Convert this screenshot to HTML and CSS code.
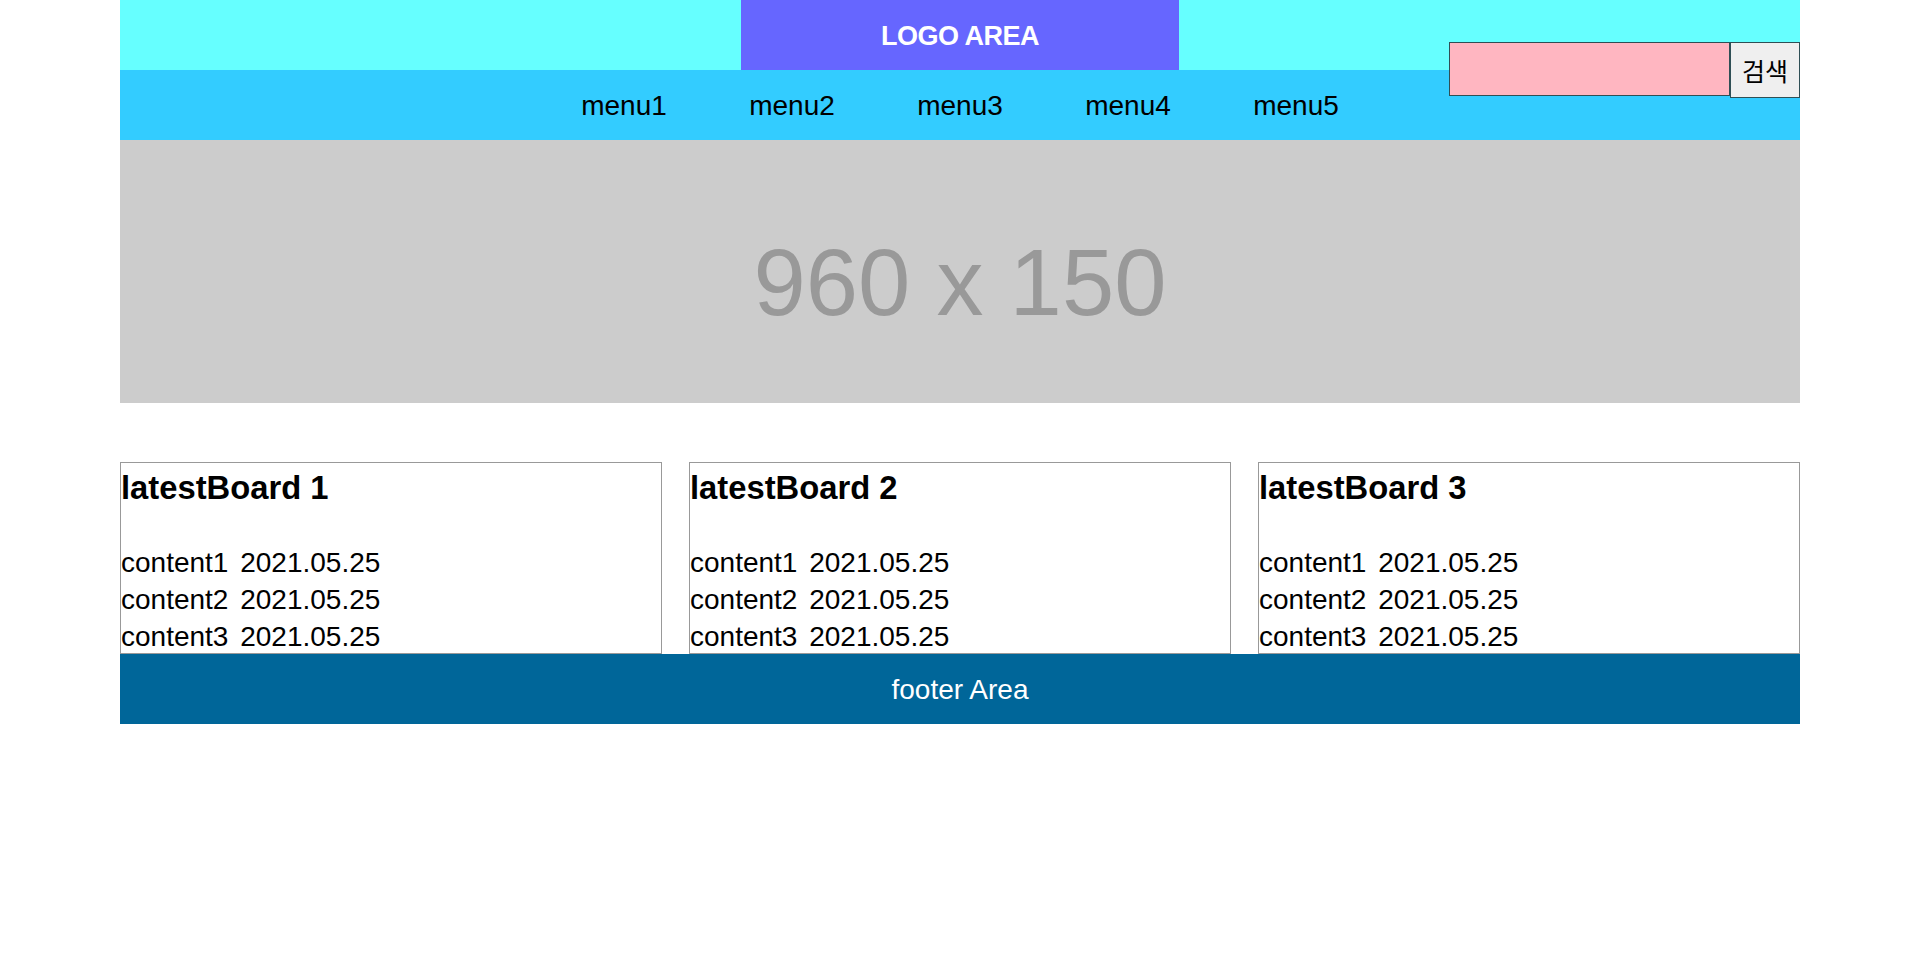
FILE: index.html
```html
<!DOCTYPE html>
<html lang="ko">
<head>
<meta charset="utf-8">
<title>Layout</title>
<link rel="stylesheet" href="styles.css">
</head>
<body>
<div class="wrap">
  <header class="header">
    <div class="logo">LOGO AREA</div>
    <form class="search">
      <input class="search-input" type="text">
      <button class="search-btn" type="button">검색</button>
    </form>
  </header>
  <nav class="nav">
    <ul class="menu">
      <li class="menu-item">menu1</li>
      <li class="menu-item">menu2</li>
      <li class="menu-item">menu3</li>
      <li class="menu-item">menu4</li>
      <li class="menu-item">menu5</li>
    </ul>
  </nav>
  <div class="banner"><span class="banner-text">960 x 150</span></div>
  <section class="boards">
    <div class="board">
      <h3 class="board-title">latestBoard 1</h3>
      <ul class="board-list">
        <li>content1 2021.05.25</li>
        <li>content2 2021.05.25</li>
        <li>content3 2021.05.25</li>
      </ul>
    </div>
    <div class="board">
      <h3 class="board-title">latestBoard 2</h3>
      <ul class="board-list">
        <li>content1 2021.05.25</li>
        <li>content2 2021.05.25</li>
        <li>content3 2021.05.25</li>
      </ul>
    </div>
    <div class="board">
      <h3 class="board-title">latestBoard 3</h3>
      <ul class="board-list">
        <li>content1 2021.05.25</li>
        <li>content2 2021.05.25</li>
        <li>content3 2021.05.25</li>
      </ul>
    </div>
  </section>
  <footer class="footer">footer Area</footer>
</div>
</body>
</html>
```
FILE: styles.css
```css
html, body {
  margin: 0;
  padding: 0;
  background: #ffffff;
}
body {
  font-family: "Liberation Sans", Arial, sans-serif;
  font-size: 28px;
  color: #000;
}
.wrap {
  width: 1680px;
  margin: 0 auto;
}
.header {
  position: relative;
  height: 70px;
  background: #66ffff;
}
.logo {
  box-sizing: border-box;
  width: 438px;
  height: 70px;
  margin: 0 auto;
  padding-top: 2px;
  background: #6666ff;
  color: #ffffff;
  font-weight: bold;
  font-size: 27px;
  letter-spacing: -0.5px;
  line-height: 68px;
  text-align: center;
}
.search {
  position: absolute;
  top: 42px;
  right: 0;
  margin: 0;
  display: flex;
  align-items: flex-start;
  z-index: 2;
}
.search-input {
  box-sizing: border-box;
  width: 281px;
  height: 54px;
  margin: 0;
  padding: 0 4px;
  border: 1px solid #2f4f55;
  background: #ffb6c1;
  outline: none;
}
.search-btn {
  box-sizing: border-box;
  width: 70px;
  height: 56px;
  margin: 0;
  padding: 0;
  border: 1px solid #2f4f55;
  border-radius: 0;
  background: #efefef;
  color: #000;
  font-family: "Noto Sans CJK KR", sans-serif;
  font-size: 25px;
  line-height: 1;
}
.nav {
  height: 70px;
  background: #33ccff;
}
.menu {
  display: flex;
  justify-content: center;
  margin: 0;
  padding: 2px 0 0;
  list-style: none;
}
.menu-item {
  width: 168px;
  line-height: 68px;
  text-align: center;
}
.banner {
  box-sizing: border-box;
  height: 263px;
  padding-top: 22px;
  background: #cccccc;
  display: flex;
  align-items: center;
  justify-content: center;
}
.banner-text {
  font-size: 94px;
  color: #999999;
  line-height: normal;
}
.boards {
  display: flex;
  justify-content: space-between;
  margin-top: 59px;
}
.board {
  box-sizing: border-box;
  width: 542px;
  height: 192px;
  border: 1px solid #999999;
  overflow: hidden;
}
.board-title {
  margin: 6px 0 0;
  font-size: 32.76px;
  line-height: 37px;
  font-weight: bold;
}
.board-list {
  margin: 38px 0 0;
  padding: 0;
  list-style: none;
  line-height: 37px;
  word-spacing: 4px;
}
.footer {
  box-sizing: border-box;
  height: 70px;
  padding-top: 2px;
  background: #006699;
  color: #ffffff;
  text-align: center;
  line-height: 68px;
}
```
